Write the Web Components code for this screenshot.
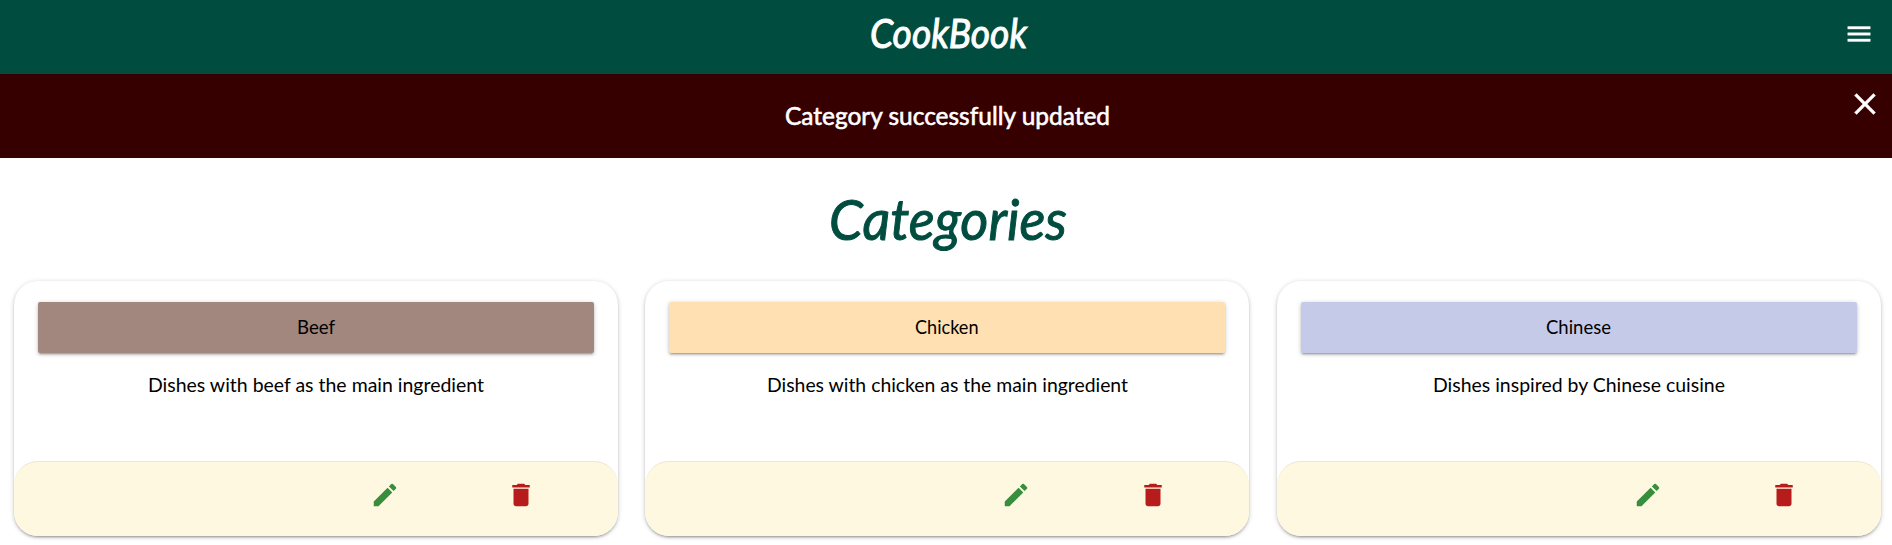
<!DOCTYPE html>
<html lang="en">
<head>
<meta charset="utf-8">
<title>CookBook</title>
<style>
html{overflow:hidden}
body{margin:0;height:545px;overflow:hidden;background:#fff;color:#000;font-family:Lato,"Noto Sans",sans-serif}
main{display:block}
</style>
</head>
<body>
<site-header></site-header>
<flash-message><fit-text width="325">Category successfully updated</fit-text></flash-message>
<main>
<page-title><fit-text width="238">Categories</fit-text></page-title>
<card-row>
<category-card style="--tone:#a1877d"><fit-text slot="name" width="38">Beef</fit-text><fit-text width="336">Dishes with beef as the main ingredient</fit-text></category-card>
<category-card style="--tone:#ffe0b2"><fit-text slot="name" width="63.5">Chicken</fit-text><fit-text width="361">Dishes with chicken as the main ingredient</fit-text></category-card>
<category-card style="--tone:#c5cae9"><fit-text slot="name" width="65">Chinese</fit-text><fit-text width="292">Dishes inspired by Chinese cuisine</fit-text></category-card>
</card-row>
</main>
<script>
function define(name, html, ready){
  customElements.define(name, class extends HTMLElement{
    constructor(){ super(); this.attachShadow({mode:'open'}).innerHTML = html; }
    connectedCallback(){ if(ready) ready(this); }
  });
}
// Condenses or widens one line of text to a given width.
define('fit-text', `<style>
:host{display:inline-block;white-space:nowrap;text-align:left}
span{display:inline-block;transform-origin:0 50%}
</style><span><slot></slot></span>`, el => {
  const span = el.shadowRoot.querySelector('span'), w = +el.getAttribute('width');
  const fit = () => {
    span.style.transform = 'none';
    el.style.width = w + 'px';
    const natural = span.getBoundingClientRect().width;
    if(natural) span.style.transform = `scaleX(${w / natural})`;
  };
  fit();
  document.fonts.ready.then(fit);
});
const paths = {
  menu:'M3 18h18v-2H3v2zm0-5h18v-2H3v2zm0-7v2h18V6H3z',
  close:'M19 6.41L17.59 5 12 10.59 6.41 5 5 6.41 10.59 12 5 17.59 6.41 19 12 13.41 17.59 19 19 17.59 13.41 12z',
  edit:'M3 17.25V21h3.75L17.81 9.94l-3.75-3.75L3 17.25zM20.71 7.04a1 1 0 0 0 0-1.41l-2.34-2.34a1 1 0 0 0-1.41 0l-1.83 1.83 3.75 3.75 1.83-1.83z',
  delete:'M6 19c0 1.1.9 2 2 2h8c1.1 0 2-.9 2-2V7H6v12zM19 4h-3.5l-1-1h-5l-1 1H5v2h14V4z'
};
define('md-icon', `<style>
:host{display:block;width:30px;height:30px}
svg{display:block;width:100%;height:100%;fill:currentColor}
</style><svg viewBox="0 0 24 24"><path/></svg>`, el =>
  el.shadowRoot.querySelector('path').setAttribute('d', paths[el.getAttribute('name')]));
define('site-header', `<style>
:host{display:grid;grid-template-columns:1fr auto 1fr;height:74px;background:#004d40;color:#fff;box-sizing:border-box;padding:0 18px 0 23px}
.logo{font:italic 400 40px/67px Lato,sans-serif;-webkit-text-stroke:1px #fff;grid-column:2}
md-icon{justify-self:end;margin-top:19px}
svg,md-icon{stroke:currentColor;stroke-width:.3}
</style><fit-text class="logo" width="157">CookBook</fit-text><md-icon name="menu"></md-icon>`);
define('flash-message', `<style>
:host{display:grid;grid-template-columns:1fr auto 1fr;height:84px;background:#370000;color:#fff;box-sizing:border-box;padding:0 9px 0 12px}
.msg{grid-column:2;font-size:25px;line-height:82px;-webkit-text-stroke:.6px #fff}
md-icon{justify-self:end;width:36px;height:36px;margin-top:12px;stroke:currentColor;stroke-width:.3}
</style><div class="msg"><slot></slot></div><md-icon name="close"></md-icon>`);
define('page-title', `<style>
:host{display:block;height:123px;text-align:center;box-sizing:border-box;padding-left:4px;color:#004d40;font:italic 400 57px/121px Lato,sans-serif;-webkit-text-stroke:1px #004d40}
</style><slot></slot>`);
define('card-row', `<style>
:host{display:grid;grid-template-columns:repeat(3,604px);column-gap:27.5px;margin-left:13.5px}
</style><slot></slot>`);
define('category-card', `<style>
:host{display:flex;flex-direction:column;height:255px;border-radius:24px;background:#fff;
box-shadow:0 2px 2px 0 rgba(0,0,0,.14),0 3px 1px -2px rgba(0,0,0,.12),0 1px 5px 0 rgba(0,0,0,.2)}
.body{flex:1;padding:21px 24px 0;text-align:center;font-size:19px}
.name{height:51px;line-height:51px;font-size:18.5px;background:var(--tone);border-radius:2px;
box-shadow:0 2px 2px 0 rgba(0,0,0,.14),0 3px 1px -2px rgba(0,0,0,.12),0 1px 5px 0 rgba(0,0,0,.2)}
.text{line-height:24px;margin-top:20px}
.actions{height:75px;box-sizing:border-box;border-top:1px solid rgba(160,160,160,.2);border-radius:24px;background:#fff8e1;display:flex;justify-content:flex-end;gap:106.5px;padding:17.5px 81.5px 0 0}
.edit{color:#388e3c}.delete{color:#b71c1c}
</style>
<div class="body"><div class="name"><slot name="name"></slot></div><div class="text"><slot></slot></div></div>
<div class="actions"><md-icon class="edit" name="edit"></md-icon><md-icon class="delete" name="delete"></md-icon></div>`);
</script>
</body>
</html>
